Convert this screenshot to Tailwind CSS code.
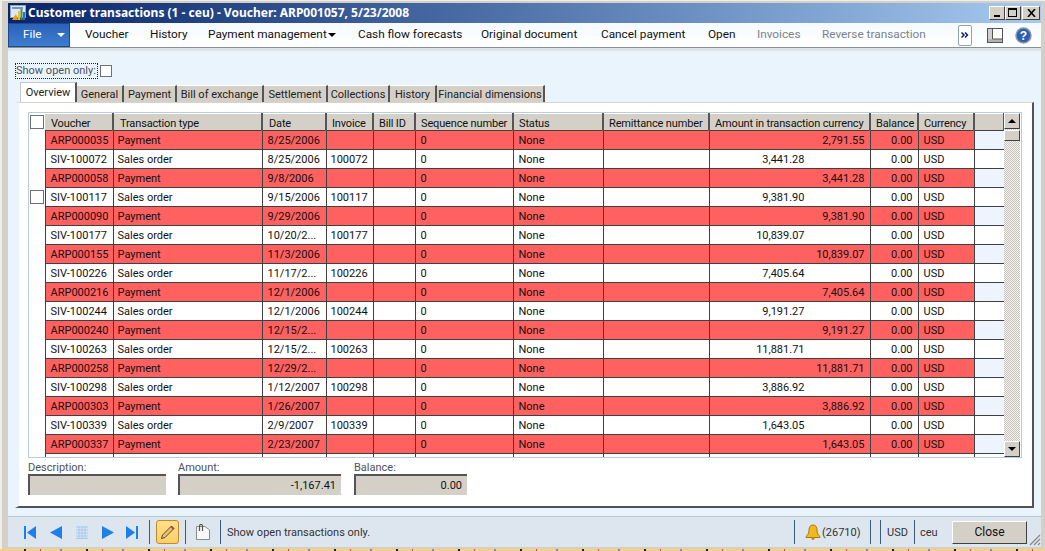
<!DOCTYPE html>
<html><head><meta charset="utf-8"><script src="https://cdn.jsdelivr.net/npm/@tailwindcss/browser@4"></script></head>
<body class="w-[1045px] h-[551px] overflow-hidden bg-[#d4d0c8] font-['Roboto',sans-serif] text-[11px] leading-none text-[#111]">
<div class="flex flex-col h-[551px] pt-[2px] pl-[7px] pr-[4px] border-l-2 border-t border-[#f0eee8]">
  <!-- title bar -->
  <div class="h-[20px] flex items-center pl-[2px] pr-[1px] bg-gradient-to-r from-[#0a246a] to-[#a6caf0] text-white font-bold font-['Noto_Sans',sans-serif] text-[12px] -ml-[1px] shrink-0">
    <svg class="w-[16px] h-[16px] mr-[2px]" viewBox="0 0 16 16"><rect x="0.5" y="0.5" width="15" height="12" fill="#dfe7f2" stroke="#8ea4c0"/><rect x="2" y="2" width="11" height="2" fill="#6f96c4"/><path d="M2 15L6 9L8 15Z" fill="#f09a20"/><rect x="8" y="6" width="2" height="9" fill="#e6c820"/><rect x="10.5" y="4" width="2" height="11" fill="#3f9a48"/><rect x="13" y="7" width="2" height="8" fill="#2f6fb8"/></svg>
    <span class="whitespace-nowrap">Customer transactions (1 - ceu) - Voucher: ARP001057, 5/23/2008</span>
    <div class="ml-auto flex">
      <div class="w-[16px] h-[14px] bg-[#d4d0c8] border border-t-white border-l-white border-r-[#404040] border-b-[#404040] relative"><div class="absolute left-[4px] bottom-[2px] w-[6px] h-[2px] bg-black"></div></div>
      <div class="w-[16px] h-[14px] bg-[#d4d0c8] border border-t-white border-l-white border-r-[#404040] border-b-[#404040] relative"><div class="absolute left-[2px] top-[1px] w-[9px] h-[9px] border border-t-2 border-black"></div></div>
      <div class="w-[18px] h-[14px] ml-[1px] bg-[#d4d0c8] border border-t-white border-l-white border-r-[#404040] border-b-[#404040] flex items-center justify-center"><svg class="w-[9px] h-[8px]" viewBox="0 0 9 8"><path d="M1 0L8 8M8 0L1 8" stroke="#000" stroke-width="1.6"/></svg></div>
    </div>
  </div>
  <!-- ribbon -->
  <div class="h-[25px] flex items-center bg-gradient-to-b from-[#f5fafe] to-white border-b border-[#8a8f96] shrink-0 -ml-[1px] text-[11.8px] whitespace-nowrap">
    <div class="w-[62px] h-[24px] bg-gradient-to-b from-[#2a62b8] to-[#3f7dd0] border border-[#1c4a90] text-white flex items-center pl-[14px] gap-[15px]">File<span class="w-0 h-0 border-x-[4px] border-t-[4px] border-x-transparent border-t-white"></span></div>
    <span class="ml-[15px] w-[65px]">Voucher</span>
    <span class="w-[58px]">History</span>
    <span class="w-[150px] flex items-center gap-[1px]">Payment management<span class="w-0 h-0 border-x-[4px] border-t-[4px] border-x-transparent border-t-black"></span></span>
    <span class="w-[123px]">Cash flow forecasts</span>
    <span class="w-[120px]">Original document</span>
    <span class="w-[107px]">Cancel payment</span>
    <span class="w-[49px]">Open</span>
    <span class="w-[65px] text-[#7c8288]">Invoices</span>
    <span class="text-[#7c8288]">Reverse transaction</span>
    <div class="ml-auto w-[14px] h-[21px] border border-[#8fa3b8] rounded-[2px] bg-white flex items-center justify-center"><svg class="w-[8px] h-[6px]" viewBox="0 0 8 6"><path d="M0.5 0.5L3 3L0.5 5.5M4 0.5L6.5 3L4 5.5" fill="none" stroke="#0a246a" stroke-width="1.5"/></svg></div>
    <svg class="w-[16px] h-[15px] ml-[15px]" viewBox="0 0 16 15"><rect x="0.5" y="0.5" width="15" height="14" fill="#fff" stroke="#555"/><rect x="1" y="11" width="14" height="3" fill="#b4b4b4"/><rect x="1" y="1" width="4" height="10" fill="#d0d0d0"/><path d="M5.5 1V11H15" fill="none" stroke="#555"/></svg>
    <svg class="w-[17px] h-[17px] ml-[12px] mr-[9px]" viewBox="0 0 17 17"><circle cx="8.5" cy="8.5" r="7.5" fill="#2f5fb0" stroke="#8b97ad" stroke-width="1.5"/><text x="8.5" y="13" text-anchor="middle" font-size="12" font-weight="700" fill="#fff" font-family="Liberation Sans">?</text></svg>
  </div>
  <!-- content -->
  <div class="flex-1 min-h-0 bg-[#eaf4fd] -ml-[1px] flex flex-col">
    <div class="h-[3px] bg-[#dce3ea] shrink-0"></div>
    <div class="flex items-center h-[14px] mt-[13px] ml-[8px] shrink-0">
      <span class="w-[81px] outline-1 outline-dotted outline-[#222] text-[#4a5260] text-[11px] leading-[14px] whitespace-nowrap">Show open only:</span>
      <div class="w-[12px] h-[12px] ml-[3px] bg-white border border-[#707070]"></div>
    </div>
    <!-- tabs -->
    <div class="flex h-[20px] items-end ml-[12px] mt-[4px] shrink-0 text-[11px] text-[#222]">
      <div class="h-[20px] w-[57px] bg-white border-t border-l border-[#c8c8c8] border-r-2 border-r-[#555] flex items-center justify-center">Overview</div>
      <div class="h-[17px] w-[47px] bg-[#d4d0c8] border-t border-t-white border-r-2 border-r-[#555] flex items-center justify-center">General</div>
      <div class="h-[17px] w-[53px] bg-[#d4d0c8] border-t border-t-white border-r-2 border-r-[#555] flex items-center justify-center">Payment</div>
      <div class="h-[17px] w-[87px] bg-[#d4d0c8] border-t border-t-white border-r-2 border-r-[#555] flex items-center justify-center">Bill of exchange</div>
      <div class="h-[17px] w-[64px] bg-[#d4d0c8] border-t border-t-white border-r-2 border-r-[#555] flex items-center justify-center">Settlement</div>
      <div class="h-[17px] w-[62px] bg-[#d4d0c8] border-t border-t-white border-r-2 border-r-[#555] flex items-center justify-center">Collections</div>
      <div class="h-[17px] w-[47px] bg-[#d4d0c8] border-t border-t-white border-r-2 border-r-[#555] flex items-center justify-center">History</div>
      <div class="h-[17px] w-[108px] bg-[#d4d0c8] border-t border-t-white border-r-2 border-r-[#555] flex items-center justify-center">Financial dimensions</div>
    </div>
    <!-- panel -->
    <div class="ml-[7px] mr-[7px] h-[406px] bg-white border-r-2 border-b-2 border-[#505458] border-l-[4px] border-l-[#eaf4fd] pt-[9px] pl-[9px] shrink-0 border-t border-t-[#d8d4cc]">
      <div class="w-[994px] h-[346px] border border-[#b8cde0] flex overflow-hidden">
        <div class="w-[975px] h-[344px] overflow-hidden">
          <table class="table-fixed border-collapse w-[975px] [&_td]:h-[19px] [&_td]:p-0 [&_td]:pl-[5px] [&_td:nth-child(3)]:pl-[4px] [&_td:nth-child(5)]:pl-[4px] [&_td]:border [&_td]:border-[#404040] [&_td]:whitespace-nowrap [&_td]:overflow-hidden [&_td:first-child]:border-0 [&_td:first-child]:bg-white [&_td:first-child]:pl-0 [&_td:last-child]:border-r-0">
            <colgroup><col class="w-[16px]"><col class="w-[68px]"><col class="w-[149px]"><col class="w-[64px]"><col class="w-[47px]"><col class="w-[42px]"><col class="w-[98px]"><col class="w-[90px]"><col class="w-[106px]"><col class="w-[161px]"><col class="w-[48px]"><col class="w-[56px]"><col class="w-[30px]"></colgroup>
            <thead><tr class="[&_th]:h-[17px] [&_th]:p-0 [&_th]:pt-[2px] [&_th]:pl-[5px] [&_th]:bg-[#d4d0c8] [&_th]:font-normal [&_th]:text-left [&_th]:tracking-[-0.15px] [&_th]:border-r-2 [&_th]:border-r-[#555] [&_th]:border-t [&_th]:border-t-white [&_th]:whitespace-nowrap">
              <th class="!bg-white !border-0 !pl-0 !pt-0"><div class="w-[14px] h-[14px] ml-[1px] border border-[#707070] bg-white"></div></th><th class="!pl-[6px]">Voucher</th><th class="!pl-[6px]">Transaction type</th><th class="!pl-[6px]">Date</th><th>Invoice</th><th>Bill ID</th><th>Sequence number</th><th>Status</th><th>Remittance number</th><th>Amount in transaction currency</th><th>Balance</th><th>Currency</th><th></th>
            </tr></thead>
            <tbody class="[&_td:nth-child(10)]:text-right [&_td:nth-child(10)]:pr-[5px] [&_td:nth-child(11)]:text-right [&_td:nth-child(11)]:pr-[5px]">
              <tr class="bg-[#ff6060]"><td></td><td>ARP000035</td><td>Payment</td><td>8/25/2006</td><td></td><td></td><td>0</td><td>None</td><td></td><td>2,791.55</td><td>0.00</td><td>USD</td><td class="!bg-[#eef4fe]"></td></tr>
              <tr class="bg-white"><td></td><td>SIV-100072</td><td>Sales order</td><td>8/25/2006</td><td>100072</td><td></td><td>0</td><td>None</td><td></td><td class="!pr-[65px]">3,441.28</td><td>0.00</td><td>USD</td><td></td></tr>
              <tr class="bg-[#ff6060]"><td></td><td>ARP000058</td><td>Payment</td><td>9/8/2006</td><td></td><td></td><td>0</td><td>None</td><td></td><td>3,441.28</td><td>0.00</td><td>USD</td><td class="!bg-[#eef4fe]"></td></tr>
              <tr class="bg-white"><td><div class="w-[14px] h-[14px] ml-[1px] border border-[#707070] bg-white"></div></td><td>SIV-100117</td><td>Sales order</td><td>9/15/2006</td><td>100117</td><td></td><td>0</td><td>None</td><td></td><td class="!pr-[65px]">9,381.90</td><td>0.00</td><td>USD</td><td></td></tr>
              <tr class="bg-[#ff6060]"><td></td><td>ARP000090</td><td>Payment</td><td>9/29/2006</td><td></td><td></td><td>0</td><td>None</td><td></td><td>9,381.90</td><td>0.00</td><td>USD</td><td class="!bg-[#eef4fe]"></td></tr>
              <tr class="bg-white"><td></td><td>SIV-100177</td><td>Sales order</td><td>10/20/2...</td><td>100177</td><td></td><td>0</td><td>None</td><td></td><td class="!pr-[65px]">10,839.07</td><td>0.00</td><td>USD</td><td></td></tr>
              <tr class="bg-[#ff6060]"><td></td><td>ARP000155</td><td>Payment</td><td>11/3/2006</td><td></td><td></td><td>0</td><td>None</td><td></td><td>10,839.07</td><td>0.00</td><td>USD</td><td class="!bg-[#eef4fe]"></td></tr>
              <tr class="bg-white"><td></td><td>SIV-100226</td><td>Sales order</td><td>11/17/2...</td><td>100226</td><td></td><td>0</td><td>None</td><td></td><td class="!pr-[65px]">7,405.64</td><td>0.00</td><td>USD</td><td></td></tr>
              <tr class="bg-[#ff6060]"><td></td><td>ARP000216</td><td>Payment</td><td>12/1/2006</td><td></td><td></td><td>0</td><td>None</td><td></td><td>7,405.64</td><td>0.00</td><td>USD</td><td class="!bg-[#eef4fe]"></td></tr>
              <tr class="bg-white"><td></td><td>SIV-100244</td><td>Sales order</td><td>12/1/2006</td><td>100244</td><td></td><td>0</td><td>None</td><td></td><td class="!pr-[65px]">9,191.27</td><td>0.00</td><td>USD</td><td></td></tr>
              <tr class="bg-[#ff6060]"><td></td><td>ARP000240</td><td>Payment</td><td>12/15/2...</td><td></td><td></td><td>0</td><td>None</td><td></td><td>9,191.27</td><td>0.00</td><td>USD</td><td class="!bg-[#eef4fe]"></td></tr>
              <tr class="bg-white"><td></td><td>SIV-100263</td><td>Sales order</td><td>12/15/2...</td><td>100263</td><td></td><td>0</td><td>None</td><td></td><td class="!pr-[65px]">11,881.71</td><td>0.00</td><td>USD</td><td></td></tr>
              <tr class="bg-[#ff6060]"><td></td><td>ARP000258</td><td>Payment</td><td>12/29/2...</td><td></td><td></td><td>0</td><td>None</td><td></td><td>11,881.71</td><td>0.00</td><td>USD</td><td class="!bg-[#eef4fe]"></td></tr>
              <tr class="bg-white"><td></td><td>SIV-100298</td><td>Sales order</td><td>1/12/2007</td><td>100298</td><td></td><td>0</td><td>None</td><td></td><td class="!pr-[65px]">3,886.92</td><td>0.00</td><td>USD</td><td></td></tr>
              <tr class="bg-[#ff6060]"><td></td><td>ARP000303</td><td>Payment</td><td>1/26/2007</td><td></td><td></td><td>0</td><td>None</td><td></td><td>3,886.92</td><td>0.00</td><td>USD</td><td class="!bg-[#eef4fe]"></td></tr>
              <tr class="bg-white"><td></td><td>SIV-100339</td><td>Sales order</td><td>2/9/2007</td><td>100339</td><td></td><td>0</td><td>None</td><td></td><td class="!pr-[65px]">1,643.05</td><td>0.00</td><td>USD</td><td></td></tr>
              <tr class="bg-[#ff6060]"><td></td><td>ARP000337</td><td>Payment</td><td>2/23/2007</td><td></td><td></td><td>0</td><td>None</td><td></td><td>1,643.05</td><td>0.00</td><td>USD</td><td class="!bg-[#eef4fe]"></td></tr>
              <tr class="bg-white"><td></td><td></td><td></td><td></td><td></td><td></td><td></td><td></td><td></td><td></td><td></td><td></td><td></td></tr>
            </tbody>
          </table>
        </div>
        <!-- scrollbar -->
        <div class="w-[16px] h-[344px] flex flex-col shrink-0 bg-[repeating-conic-gradient(#c8c4bc_0_25%,#f4f2ee_0_50%)] bg-[length:2px_2px]">
          <div class="h-[16px] bg-[#d4d0c8] border border-t-white border-l-white border-r-[#404040] border-b-[#404040] flex items-center justify-center shrink-0"><span class="w-0 h-0 border-x-[4px] border-b-[4px] border-x-transparent border-b-black"></span></div>
          <div class="h-[11px] mt-[1px] bg-[#d4d0c8] border border-t-white border-l-white border-r-[#404040] border-b-[#404040] shrink-0"></div>
          <div class="h-[16px] mt-auto bg-[#d4d0c8] border border-t-white border-l-white border-r-[#404040] border-b-[#404040] flex items-center justify-center shrink-0"><span class="w-0 h-0 border-x-[4px] border-t-[4px] border-x-transparent border-t-black"></span></div>
        </div>
      </div>
      <!-- fields -->
      <div class="flex mt-[1px] text-[#4a5260]">
        <div class="w-[150px]"><div class="h-[11px] leading-[11px] mt-[3px] mb-[1px]">Description:</div><div class="w-[138px] h-[21px] bg-[#d4d0c8] border-t-2 border-l-2 border-[#555]"></div></div>
        <div class="w-[176px]"><div class="h-[11px] leading-[11px] mt-[3px] mb-[1px]">Amount:</div><div class="w-[163px] h-[21px] bg-[#d4d0c8] border-t-2 border-l-2 border-[#555] flex items-center justify-end pr-[5px] text-[#111]">-1,167.41</div></div>
        <div class="w-[113px]"><div class="h-[11px] leading-[11px] mt-[3px] mb-[1px]">Balance:</div><div class="w-[113px] h-[21px] bg-[#d4d0c8] border-t-2 border-l-2 border-[#555] flex items-center justify-end pr-[5px] text-[#111]">0.00</div></div>
      </div>
    </div>
    <div class="h-[8px] shrink-0"></div>
    <!-- status bar -->
    <div class="h-[31px] bg-[#dde6ef] border-t border-[#b8c4d0] flex items-center text-[11px] text-[#333] shrink-0 whitespace-nowrap">
      <svg class="w-[12px] h-[13px] ml-[16px]" viewBox="0 0 12 13"><rect width="2" height="13" fill="#1f7fe8"/><path d="M12 0V13L3 6.5Z" fill="#1f7fe8"/></svg>
      <svg class="w-[12px] h-[13px] ml-[14px]" viewBox="0 0 12 13"><path d="M12 0V13L0 6.5Z" fill="#1f7fe8"/></svg>
      <svg class="w-[12px] h-[13px] ml-[14px]" viewBox="0 0 12 13"><path d="M0 1H12M0 4H12M0 7H12M0 10H12M0 12.5H12M3 0V13M6 0V13M9 0V13" stroke="#a8c8f0"/></svg>
      <svg class="w-[12px] h-[13px] ml-[14px]" viewBox="0 0 12 13"><path d="M0 0V13L12 6.5Z" fill="#1f7fe8"/></svg>
      <svg class="w-[12px] h-[13px] ml-[12px]" viewBox="0 0 12 13"><path d="M0 0V13L9 6.5Z" fill="#1f7fe8"/><rect x="10" width="2" height="13" fill="#1f7fe8"/></svg>
      <div class="w-px h-[24px] bg-[#3a5a80] ml-[11px]"></div>
      <div class="w-[23px] h-[24px] ml-[6px] bg-gradient-to-b from-[#ffe08a] to-[#fbcf68] border border-[#c08a30] rounded-[3px] flex items-center justify-center"><svg class="w-[16px] h-[16px]" viewBox="0 0 16 16"><path d="M1.5 14.5L2.5 11L11.5 2L14 4.5L5 13.5Z" fill="#e8c070" stroke="#5a4a30"/><path d="M11 2.5L13.5 5" stroke="#c03050" stroke-width="1.6"/></svg></div>
      <div class="w-px h-[24px] bg-[#3a5a80] ml-[6px]"></div>
      <svg class="w-[14px] h-[16px] ml-[10px]" viewBox="0 0 14 16"><path d="M0.5 2.5H9L13.5 6V15.5H0.5Z" fill="#f8f8f8" stroke="#8a8a8a"/><path d="M3.5 7V2A1.5 1.5 0 0 1 6.5 2V7" fill="none" stroke="#555" stroke-width="1.2"/></svg>
      <div class="w-px h-[24px] bg-[#3a5a80] ml-[10px]"></div>
      <span class="ml-[6px]">Show open transactions only.</span>
      <div class="w-px h-[24px] bg-[#3a5a80] ml-auto"></div>
      <svg class="w-[16px] h-[16px] ml-[10px]" viewBox="0 0 16 16"><path d="M8 1C5 1 4 3.5 4 6C4 9 3 11 1 12.5V13.5H15V12.5C13 11 12 9 12 6C12 3.5 11 1 8 1Z" fill="#f2b820" stroke="#b07808"/><circle cx="8" cy="14.5" r="1.5" fill="#c08810"/></svg>
      <span class="ml-[1px] w-[38px]">(26710)</span>
      <div class="w-px h-[24px] bg-[#3a5a80] ml-[10px]"></div>
      <div class="w-px h-[24px] bg-[#3a5a80] ml-[9px]"></div>
      <span class="ml-[6px] w-[20px]">USD</span>
      <div class="w-px h-[24px] bg-[#3a5a80] ml-[7px]"></div>
      <span class="ml-[5px] w-[17px]">ceu</span>
      <div class="w-[75px] h-[23px] ml-[15px] bg-[#d4d0c8] border border-t-white border-l-white border-r-[#404040] border-b-[#404040] flex items-center justify-center text-[#111] text-[12px]">Close</div>
      <svg class="w-[12px] h-[12px] ml-[2px] self-end mb-[1px]" viewBox="0 0 12 12"><path d="M11 1L1 11M11 5L5 11M11 9L9 11" stroke="#888" stroke-width="1.2"/></svg>
    </div>
    <div class="flex-1 min-h-0 bg-[#d4d0c8] border-b border-[#606060]"></div>
  </div>
</div>
<div class="fixed left-0 right-0 bottom-0 h-[2px] bg-[repeating-linear-gradient(90deg,#f5d080_0_24px,#202020_24px_26px,#f5d080_26px_40px,#c05040_40px_41px,#f5d080_41px_60px,#8a8ab8_60px_62px)]"></div>
</body></html>
